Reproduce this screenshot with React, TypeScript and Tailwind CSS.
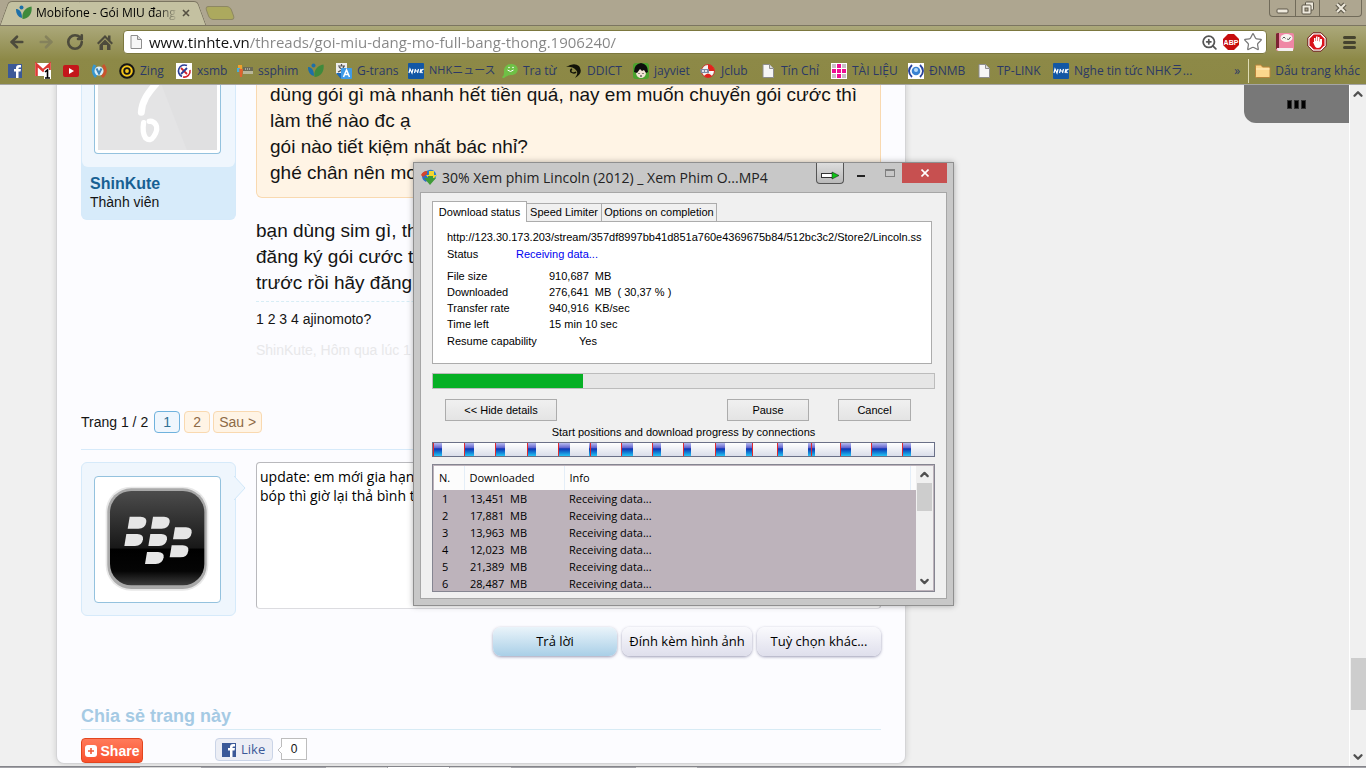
import type { ReactNode } from "react";
import { ArrowLeft, ArrowRight, ChevronDown, ChevronUp, RotateCw, Star, ZoomIn } from "lucide-react";

const ui = "font-['Open_Sans','Noto_Sans_CJK_JP',sans-serif]";

function LeafIcon() {
  return (
    <svg viewBox="0 0 16 16" className="size-4">
      <circle cx="5.500" cy="2.500" r="2" fill="#1d6fa8" />
      <path d="M0 4c3 0 6 2 6 9C2 12 0 9 0 4z" fill="#1d6fa8" />
      <path d="M6.500 14C5.500 7 9 3 15.500 1.500c1 6-2 12-9 12.500z" fill="#3f8a3c" />
    </svg>
  );
}

function PageIcon() {
  return (
    <svg viewBox="0 0 16 16" className="size-4">
      <path d="M3 1.500h6.500l4 4v9H3z" fill="#f6f6f6" stroke="#8d8d8d" />
      <path d="M9.500 1.500v4h4" fill="#dcdcdc" stroke="#8d8d8d" />
    </svg>
  );
}

function NhkIcon() {
  return (
    <svg viewBox="0 0 16 16" className="size-4">
      <rect width="16" height="16" rx="1" fill="#1257a5" />
      <path d="M1 10l1-4 2 4 1-4M6.500 10l1-4m-.5 2h3m-.5 2 1-4m1.500 4 1-4m2.500 0-3 2 2 2" fill="none" stroke="#fff" strokeWidth="1.200" />
    </svg>
  );
}

const icons: Record<string, ReactNode> = {
  facebook: (
    <svg viewBox="0 0 16 16" className="size-4">
      <rect x="1" y="1" width="14" height="14" fill="#3b5998" />
      <path d="M9 15V8.500H7V6h2V5q0-3 3-3h2v2.500h-1.500q-1 0-1 1V6H14l-.5 2.500h-2V15z" fill="#fff" />
    </svg>
  ),
  gmail: (
    <svg viewBox="0 0 16 16" className="size-4 overflow-visible">
      <rect y="0" width="16" height="13" fill="#fff" />
      <path d="M1.500 13V1.500L8 7.500l6.500-6V7" fill="none" stroke="#dd3a34" strokeWidth="2.600" />
      <path d="M9 10V7l3-2h2v8h2v3H9v-3h2v-3z" fill="#fff" />
      <path d="M10 9l2.500-2V15M10 15h5" fill="none" stroke="#000" strokeWidth="1.600" />
    </svg>
  ),
  youtube: (
    <svg viewBox="0 0 16 16" className="size-4">
      <rect y="2" width="16" height="12" rx="2" fill="#c4171b" />
      <path d="M6 5v6l5-3z" fill="#fff" />
    </svg>
  ),
  shield: (
    <svg viewBox="0 0 16 16" className="size-4">
      <path d="M4 2Q0 8 5 14" fill="none" stroke="#3797cf" strokeWidth="3" />
      <path d="M12 2q5 6-1 12" fill="none" stroke="#c9532e" strokeWidth="3" />
      <circle cx="8" cy="8" r="4.500" fill="#dceffa" />
      <path d="m5.500 5.500 2.500 5 2.500-5" fill="none" stroke="#3b84b8" strokeWidth="2" />
    </svg>
  ),
  zing: (
    <svg viewBox="0 0 16 16" className="size-4">
      <circle cx="8" cy="8" r="6.800" fill="#f3c51b" stroke="#151515" strokeWidth="2" />
      <circle cx="8" cy="8" r="2.800" fill="#f3c51b" stroke="#151515" strokeWidth="1.800" />
    </svg>
  ),
  xsmb: (
    <svg viewBox="0 0 16 16" className="size-4">
      <rect width="16" height="16" fill="#fff" />
      <path d="M11 2.500A6 6 0 1 0 6 13.500" fill="none" stroke="#2b3d96" strokeWidth="1.600" />
      <path d="M14 7a6 6 0 0 1-7 7" fill="none" stroke="#d2222c" strokeWidth="1.600" />
      <path d="m5 5 6 6" stroke="#d2222c" strokeWidth="1.800" />
      <path d="m11 5-6 6" stroke="#2b3d96" strokeWidth="1.800" />
    </svg>
  ),
  film: (
    <svg viewBox="0 0 16 16" className="size-4">
      <path d="M1 2h4v5H1z" fill="#f0a02b" />
      <path d="M0 5h3v4H0z" fill="#43b0d8" />
      <path d="M2 6h4l-1 8H3z" fill="#e0622e" />
      <path d="M6 4h10v4H6z" fill="#6b6a55" />
      <path d="M6 8h10v3H6z" fill="#b9b79a" />
      <path d="M8 6h6" stroke="#ddd" strokeDasharray="1 1" />
    </svg>
  ),
  leaf: <LeafIcon />,
  translate: (
    <svg viewBox="0 0 16 16" className="size-4">
      <rect width="11" height="11" fill="#ededed" />
      <path d="M2 3h7M5.500 1v2M8 3Q7 7 2 9m1-5 5 4" fill="none" stroke="#555" strokeWidth="1.200" />
      <path d="M0 10h5v6z" fill="#1d68b8" />
      <rect x="5" y="5" width="11" height="11" rx="1" fill="#3f9be8" />
      <path d="m7.500 14 3-7 3 7m-5-2.500h4" fill="none" stroke="#fff" strokeWidth="1.500" />
    </svg>
  ),
  nhk: <NhkIcon />,
  bubble: (
    <svg viewBox="0 0 16 16" className="size-4">
      <path d="M9 1c9 0 9 11 0 11-2 0-4 1-7 3 0 0-2 0-2-1 2-1 2-3 2-6 0-4 3-7 7-7z" fill="#6fc046" />
      <path d="M5.500 7q3 3 6 0" fill="none" stroke="#fff" />
      <circle cx="7" cy="4.500" r=".8" fill="#fff" />
      <circle cx="11" cy="4.500" r=".8" fill="#fff" />
    </svg>
  ),
  swirl: (
    <svg viewBox="0 0 16 16" className="size-4">
      <path d="M0 4Q8-1 13 3q5 7-4 12 4-5 1-8-4-4-10-3z" fill="#121208" />
      <path d="M10 9q-2 2-5 0-1-2 1-3" fill="none" stroke="#121208" strokeWidth="1.500" />
    </svg>
  ),
  face: (
    <svg viewBox="0 0 16 16" className="size-4">
      <rect width="16" height="16" rx="3" fill="#4ba32d" />
      <ellipse cx="8" cy="9.500" rx="5" ry="5.500" fill="#f2e4d6" />
      <path d="M1 9Q1 1 8 0q7 1 7 9l-2 1-2-3-2 1-2-2-3 4-3-1z" fill="#0d0d0d" />
      <path d="M5.500 10.500h1m3 0h1M7 13h2" stroke="#222" />
    </svg>
  ),
  ball: (
    <svg viewBox="0 0 16 16" className="size-4">
      <circle cx="8" cy="8" r="6.500" fill="#f3f3f3" stroke="#c5362b" />
      <path d="M8 1.500A6.500 6.500 0 0 1 14.500 8H8zM4 13q4-5 8 0-4 3-8 0z" fill="#e2231b" />
      <path d="M0 6h9v4H1z" fill="#7e8aa2" />
      <path d="M2 8h6m3 1h3" stroke="#fff" strokeWidth="1.500" strokeDasharray="2 1" />
    </svg>
  ),
  page: <PageIcon />,
  grid: (
    <svg viewBox="0 0 16 16" className="size-4">
      <rect width="16" height="16" fill="#fff" />
      <path d="M1 1h4v4H1zm10 0h4v4h-4zM1 11h4v4H1zm10 0h4v4h-4z" fill="#c9bfc6" />
      <path d="M6 1h4v4H6zM1 6h4v4H1zm5 0h4v4H6zm5 0h4v4h-4zm-5 5h4v4H6z" fill="#ee0f93" />
    </svg>
  ),
  globe: (
    <svg viewBox="0 0 16 16" className="size-4">
      <rect width="16" height="16" fill="#fff" />
      <path d="M4 2Q-2 8 4 14M12 2q6 6 0 12" fill="none" stroke="#27429b" strokeWidth="1.800" />
      <circle cx="8" cy="8" r="4.300" fill="#3a83d2" />
      <circle cx="8" cy="7" r="2" fill="#b9dcf8" />
    </svg>
  ),
};

const bookmarks = [
  { icon: "facebook", label: "", name: "Facebook", w: "w-7" },
  { icon: "gmail", label: "", name: "Gmail", w: "w-7" },
  { icon: "youtube", label: "", name: "YouTube", w: "w-7" },
  { icon: "shield", label: "", name: "Shield", w: "w-7" },
  { icon: "zing", label: "Zing", name: "Zing", w: "w-[57px]" },
  { icon: "xsmb", label: "xsmb", name: "xsmb", w: "w-[61px]" },
  { icon: "film", label: "ssphim", name: "ssphim", w: "w-[71px]" },
  { icon: "leaf", label: "", name: "Tinh tế", w: "w-7" },
  { icon: "translate", label: "G-trans", name: "G-trans", w: "w-[72px]" },
  { icon: "nhk", label: "NHKニュース", name: "NHK", w: "w-[94px] text-[11px]" },
  { icon: "bubble", label: "Tra từ", name: "Tra từ", w: "w-16" },
  { icon: "swirl", label: "DDICT", name: "DDICT", w: "w-[67px]" },
  { icon: "face", label: "jayviet", name: "jayviet", w: "w-[67px]" },
  { icon: "ball", label: "Jclub", name: "Jclub", w: "w-[60px]" },
  { icon: "page", label: "Tín Chỉ", name: "Tín Chỉ", w: "w-[71px]" },
  { icon: "grid", label: "TÀI LIỆU", name: "TÀI LIỆU", w: "w-[77px]" },
  { icon: "globe", label: "ĐNMB", name: "ĐNMB", w: "w-[68px]" },
  { icon: "page", label: "TP-LINK", name: "TP-LINK", w: "w-[77px]" },
  { icon: "nhk", label: "Nghe tin tức NHKラ...", name: "NHK radio", w: "w-[140px]" },
];

function TitleBar() {
  return (
    <header className="flex h-[25px] items-stretch bg-[#aea690]">
      <div className="relative ml-1 flex w-[198px] items-center pl-3">
        <span className="absolute inset-y-0 top-px left-0 w-3/5 -skew-x-[20deg] rounded-tl border-t border-l border-[#7b7561] bg-[#c4c1a1]" />
        <span className="absolute inset-y-0 top-px right-0 w-3/5 skew-x-[20deg] rounded-tr border-t border-r border-[#7b7561] bg-[#c4c1a1]" />
        <span className="relative"><LeafIcon /></span>
        <span className="relative ml-1 w-[142px] text-xs whitespace-nowrap text-black [mask-image:linear-gradient(to_right,black_85%,transparent)]">Mobifone - Gói MIU đang</span>
        <button aria-label="Close tab" className="relative ml-1">
          <svg viewBox="0 0 8 8" className="size-2"><path d="m1 1 6 6m0-6-6 6" stroke="#555042" strokeWidth="1.600" /></svg>
        </button>
      </div>
      <button aria-label="New tab" className="mt-[6px] ml-[5px] h-[14px] w-[26px] skew-x-[20deg] rounded border border-[#8d8763] bg-[#aca95e]" />
      <div className="mr-1 ml-auto flex h-[17px] rounded-b border border-t-0 border-[#716b5a]">
        <button aria-label="Minimize" className="flex w-[25px] items-center justify-center">
          <svg viewBox="0 0 13 13" className="size-[13px]"><rect x="1" y="7" width="11" height="4" rx="1" fill="#eee9dc" stroke="#5e594b" /></svg>
        </button>
        <button aria-label="Restore" className="flex w-[25px] items-center justify-center border-x border-[#716b5a]">
          <svg viewBox="0 0 14 14" className="size-[14px]" fill="#eee9dc" stroke="#5e594b"><rect x="4.500" y="1" width="8" height="8" rx="1" /><rect x="1" y="4" width="9" height="9" rx="1" /><rect x="4" y="7" width="3" height="3" fill="#aea690" /></svg>
        </button>
        <button aria-label="Close" className="flex w-[41px] items-center justify-center">
          <svg viewBox="0 0 12 12" className="size-3" fill="none"><path d="m2 2 8 8m0-8-8 8" stroke="#5e594b" strokeWidth="4.500" /><path d="m2 2 8 8m0-8-8 8" stroke="#eee9dc" strokeWidth="2.200" /></svg>
        </button>
      </div>
    </header>
  );
}

function Toolbar() {
  return (
    <div className="flex h-[32px] shrink-0 items-center border-t border-[#7b7561] pt-px pr-2 pl-2 text-[#4d4b3c]">
      <button aria-label="Back" className="mr-[11px]"><ArrowLeft size={18} strokeWidth={3.5} /></button>
      <button aria-label="Forward" className="mr-[11px] text-[#85825c]"><ArrowRight size={18} strokeWidth={3.5} /></button>
      <button aria-label="Reload" className="mr-[13px]"><RotateCw size={18} strokeWidth={3.5} /></button>
      <button aria-label="Home" className="mr-[10px]">
        <svg viewBox="0 0 16 16" className="size-4" fill="currentColor"><path d="M8 1 0 9l1.500 1.500L8 4l6.500 6.500L16 9l-2.500-2.500V1.500H11V4zM2.500 11 8 5.500l5.500 5.500v5H10v-5H6v5H2.500z" /></svg>
      </button>
      <div className="flex h-6 flex-1 items-center rounded-sm border border-[#7c783f] bg-white pr-[3px] pl-1">
        <PageIcon />
        <input
          aria-label="Address"
          readOnly
          defaultValue="www.tinhte.vn/threads/goi-miu-dang-mo-full-bang-thong.1906240/"
          className="ml-[5px] h-[22px] min-w-0 flex-1 bg-[linear-gradient(to_right,#111_100px,#858585_100px)] bg-clip-text text-[15px] text-transparent outline-none"
        />
        <ZoomIn size={17} strokeWidth={2.5} color="#555" />
        <svg viewBox="0 0 16 16" className="ml-[5px] size-4">
          <path d="M5 0h6l5 5v6l-5 5H5l-5-5V5z" fill="#c70d0d" />
          <text x="8" y="11" fontSize="7" fontWeight="700" textAnchor="middle" fill="#fff" fontFamily="Liberation Sans, sans-serif">ABP</text>
        </svg>
        <Star size={20} strokeWidth={1.5} color="#777" className="ml-1" />
      </div>
      <button aria-label="Dictionary" className="ml-2">
        <svg viewBox="0 0 20 20" className="size-5">
          <path d="M1 2q0-1 2-1h14q2 0 2 2v14l-2 2H3q-2 0-2-2z" fill="#ef86a5" />
          <path d="M1 2q0-1 2-1h1v15l-3 1z" fill="#7c2333" />
          <path d="M2 16h16v3H4q-2 0-2-3z" fill="#f2eef0" />
          <ellipse cx="11.500" cy="6" rx="6" ry="4" fill="#f6f2ef" />
          <path d="M7.500 6.500q1.500-3 3 0M12 7q2 2 3.500-2" fill="none" stroke="#555" />
        </svg>
      </button>
      <button aria-label="Blocker" className="ml-3">
        <svg viewBox="0 0 20 20" className="size-5">
          <path d="M6 .8h8L19.200 6v8L14 19.200H6L.8 14V6z" fill="#fff" stroke="#6b1512" />
          <path d="M6.700 2.500h6.600l4.200 4.200v6.600l-4.200 4.200H6.700l-4.200-4.200V6.700z" fill="#d8121b" />
          <path d="M6 10h1V6h1.500v3h.5V4.500h1.500V9h.5V5h1.500v4.500h.5V7H15v5q-1 4-4 4-2 0-3-1.500z" fill="#fff" />
        </svg>
      </button>
      <button aria-label="Menu" className="mr-[2px] ml-4 flex flex-col gap-[2px]">
        <span className="h-[3px] w-[13px] rounded-sm bg-[#45432f]" />
        <span className="h-[3px] w-[13px] rounded-sm bg-[#45432f]" />
        <span className="h-[3px] w-[13px] rounded-sm bg-[#45432f]" />
      </button>
    </div>
  );
}

function Bookmarks() {
  return (
    <nav className="flex h-[28px] items-center overflow-hidden border-b border-[#a5a5a5] pr-[6px] pl-[7px] text-xs whitespace-nowrap text-[#2b3866]">
      {bookmarks.map((b, i) => (
        <a key={i} href="#" aria-label={b.name} className={`flex shrink-0 items-center gap-[5px] ${b.w}`}>
          {icons[b.icon]}
          {b.label}
        </a>
      ))}
      <button aria-label="More bookmarks" className="ml-auto">»</button>
      <span className="mr-[6px] ml-2 h-6 w-px bg-[#dedbb4]" />
      <a href="#" className="flex items-center gap-1">
        <svg viewBox="0 0 16 16" className="size-4"><path d="M.5 3q0-1 1-1H6l1.500 2H14q1 0 1 1v8.500q0 1-1 1H1.500q-1 0-1-1z" fill="#fbd78c" stroke="#b8843b" /><path d="M1 6h13.500" stroke="#fff0c4" /></svg>
        Dấu trang khác
      </a>
    </nav>
  );
}

function Post() {
  return (
    <article className="flex items-start gap-5">
      <aside className="w-[155px] rounded-b-md border border-t-0 border-[#d6eafa] bg-[#d7ebfa]">
        <div className="rounded-b-md bg-[#eff6fd] pr-[14px] pb-[13px] pl-3">
          <div className="rounded-b border border-t-0 border-[#94c2de] bg-white px-[3px] pb-[3px]">
            <svg viewBox="141 6 360 204" className="h-[68px] w-full" preserveAspectRatio="none">
              <rect x="141" y="6" width="360" height="204" fill="#e4e4e5" />
              <path d="M330 6 410 210h91V6z" fill="#e0e0e1" />
              <path d="M325 0C308 25 275 50 272 97" fill="none" stroke="#fff" strokeWidth="21" strokeLinecap="round" />
              <path d="M279 128q-5 30 6 46 14 12 25-5 14-21 6-35-8-12-20-10" fill="none" stroke="#fff" strokeWidth="16" strokeLinecap="round" strokeLinejoin="round" />
            </svg>
          </div>
        </div>
        <div className="px-2 pt-[7px] pb-2">
          <a href="#" className="block text-base leading-5 font-bold text-[#176093]">ShinKute</a>
          <p className="text-sm leading-[17px]">Thành viên</p>
        </div>
      </aside>
      <div className="min-w-0 flex-1 text-[19px] leading-[26px] text-[#141414]">
        <blockquote className="rounded-b-md border border-t-0 border-[#f9d9b0] bg-[#fff4e5] px-[13px] pb-[11px]">
          dùng gói gì mà nhanh hết tiền quá, nay em muốn chuyển gói cước thì làm thế nào đc ạ<br />
          gói nào tiết kiệm nhất bác nhỉ?<br />
          ghé chân nên mo
        </blockquote>
        <p className="mt-5 whitespace-nowrap">
          bạn dùng sim gì, th<br />
          đăng ký gói cước t<br />
          trước rồi hãy đăng
        </p>
        <p className="mt-[5px] border-t border-dashed border-[#d7edf6] pt-[7px] text-sm leading-5">1 2 3 4 ajinomoto?</p>
        <p className="mt-[11px] text-sm leading-5 text-[#e8e8ea]">ShinKute, Hôm qua lúc 1</p>
      </div>
    </article>
  );
}

function BlackberryAvatar() {
  const keys = [[239, 350], [309, 350], [375, 382], [229, 402], [301, 402], [365, 436], [291, 456]];
  return (
    <svg viewBox="144 240 357 357" className="block w-full">
      <defs>
        <linearGradient id="key" x1="0" y1="0" x2="0" y2="1">
          <stop offset="0" stopColor="#4c4c4c" />
          <stop offset=".6" stopColor="#181818" />
          <stop offset=".62" stopColor="#000" />
          <stop offset=".85" stopColor="#050505" />
          <stop offset="1" stopColor="#3c3c3c" />
        </linearGradient>
      </defs>
      <rect x="167" y="260" width="308" height="312" rx="76" fill="#e8e8e8" />
      <rect x="172" y="265" width="298" height="302" rx="72" fill="#a9a9a9" />
      <rect x="180" y="273" width="283" height="283" rx="64" fill="url(#key)" />
      {keys.map(([x, y]) => (
        <path key={`${x}-${y}`} transform={`translate(${x} ${y})`} d="M0 0h33q19 1 17 16-3 20-24 20H-6z" fill="#e6e6e6" />
      ))}
    </svg>
  );
}

function Reply() {
  const base = "h-[29px] rounded-lg text-[13px] text-black shadow-[0_1px_3px_rgba(90,90,130,0.6)]";
  return (
    <form onSubmit={(e) => e.preventDefault()}>
      <div className="flex items-start gap-5">
        <div className="relative w-[155px] rounded-md border border-[#d6eafa] bg-[#eff6fd] pt-[13px] pr-[14px] pb-3 pl-3">
          <div className="rounded border border-[#94c2de] bg-white p-[3px]"><BlackberryAvatar /></div>
          <svg viewBox="0 0 12 24" className="absolute top-[13px] -right-[11px] h-6 w-3"><path d="M0 0 11 12 0 24z" fill="#eff6fd" /><path d="M0 0 11 12 0 24" fill="none" stroke="#d0e7f9" /></svg>
        </div>
        <textarea
          aria-label="Reply"
          className={`h-[147px] flex-1 resize-none rounded border border-[#b9b9bd] border-b-[#dcdce0] bg-white px-[3px] py-1 text-sm leading-[19px] text-black outline-none ${ui}`}
          defaultValue={"update: em mới gia hạn\nbóp thì giờ lại thả bình t"}
        />
      </div>
      <div className={`mt-[11px] flex justify-end gap-[5px] ${ui}`}>
        <button className={`w-[124px] bg-linear-to-b from-[#eaf4fa] to-[#a9cfe7] ${base}`}>Trả lời</button>
        <button className={`w-[130px] bg-linear-to-b from-[#fafafd] to-[#dfdfec] ${base}`}>Đính kèm hình ảnh</button>
        <button className={`w-[124px] bg-linear-to-b from-[#fafafd] to-[#dfdfec] ${base}`}>Tuỳ chọn khác...</button>
      </div>
    </form>
  );
}

function ShareRow() {
  return (
    <section>
      <h2 className="mt-12 border-b border-[#d7ebf5] pb-[1px] text-lg leading-6 font-bold text-[#a5cae4]">Chia sẻ trang này</h2>
      <div className="mt-2 flex items-start">
        <button className="flex h-[25px] w-[62px] items-center justify-center gap-1 rounded-sm border border-[#e2461f] bg-linear-to-b from-[#ff7a5a] to-[#f9502c] text-sm font-bold text-white">
          <svg viewBox="0 0 12 12" className="size-3"><rect width="12" height="12" rx="3" fill="#fff" /><path d="M6 3v6M3 6h6" stroke="#f15a38" strokeWidth="1.600" /></svg>
          Share
        </button>
        <button className={`ml-[72px] flex h-[23px] w-[58px] items-center gap-1 rounded-sm border border-[#cad4e7] bg-[#eceef5] pl-[5px] text-[13px] text-[#3b5998] ${ui}`}>
          {icons.facebook}
          Like
        </button>
        <div className="relative ml-2 flex h-[22px] w-[26px] items-center justify-center border border-[#bdbdbd] bg-white text-xs">
          0
          <svg viewBox="0 0 5 8" className="absolute top-[7px] -left-[5px] h-2 w-[5px]"><path d="M5 0 1 4l4 4" fill="#fff" stroke="#bdbdbd" /></svg>
        </div>
      </div>
    </section>
  );
}

function ForumPage() {
  const pageLink = "flex h-[22px] items-center justify-center rounded-sm border";
  return (
    <div className="ml-14 max-w-[850px] flex-1 self-start -mt-[3px] rounded-b-lg border border-t-0 border-[#d4d4d6] bg-[#fcfcff] px-6 shadow-[0_0_6px_rgba(0,0,0,0.15)]">
      <Post />
      <nav className="mt-[51px] flex h-[22px] items-center text-sm text-[#8d6a45]">
        <span className="mr-[6px] text-[#141414]">Trang 1 / 2</span>
        <a href="#" className={`w-[26px] border-[#6fb2dd] bg-[#eff6fd] text-[#2f7096] ${pageLink}`}>1</a>
        <a href="#" className={`ml-1 w-[26px] border-[#f9d9b0] bg-[#fff4e5] ${pageLink}`}>2</a>
        <a href="#" className={`ml-[3px] w-[49px] border-[#f9d9b0] bg-[#fff4e5] ${pageLink}`}>Sau &gt;</a>
      </nav>
      <hr className="mt-4 mb-3 border-[#d6eafa]" />
      <Reply />
      <ShareRow />
    </div>
  );
}

function PageScrollbar() {
  return (
    <div className="flex w-[17px] shrink-0 flex-col items-center border-l border-white bg-[#f0f0f0] text-[#505050]">
      <ChevronUp size={14} strokeWidth={4} className="mt-[2px]" />
      <span className="mt-auto mb-[40px] h-[52px] w-[15px] bg-[#cdcdcd]" />
      <ChevronDown size={14} strokeWidth={4} className="mb-[2px]" />
    </div>
  );
}

const stats = [
  ["File size", "910,687  MB"],
  ["Downloaded", "276,641  MB  ( 30,37 % )"],
  ["Transfer rate", "940,916  KB/sec"],
  ["Time left", "15 min 10 sec"],
];

const segments = [
  { x: 0, w: 9, red: 0 }, { x: 31, w: 10, red: 0 }, { x: 62, w: 10, red: 0 }, { x: 94, w: 9, red: 0 },
  { x: 125, w: 12, red: 0 }, { x: 156, w: 8, red: 1 }, { x: 188, w: 12, red: 0 }, { x: 219, w: 9, red: 0 },
  { x: 250, w: 8, red: 0 }, { x: 282, w: 10, red: 0 }, { x: 313, w: 7, red: 6 }, { x: 344, w: 6, red: 0 },
  { x: 375, w: 7, red: 3 }, { x: 407, w: 11, red: 0 }, { x: 438, w: 16, red: 0 }, { x: 469, w: 9, red: 0 },
];

const connections = ["13,451", "17,881", "13,963", "12,023", "21,389", "28,487"];

function DownloadDialog() {
  const button = "h-[22px] border border-[#acacac] bg-linear-to-b from-[#f0f0f0] to-[#e4e4e4]";
  return (
    <section role="dialog" aria-label="Download" className="absolute top-[162px] left-[413px] w-[541px] border border-[#8f8f8f] bg-[#c8c8c8] px-[6px] pb-[6px] text-[11px] text-black shadow-[0_0_6px_rgba(0,0,0,0.3)]">
      <div className={`flex h-[29px] items-start ${ui}`}>
        <svg viewBox="0 0 16 16" className="mt-[6px] ml-px size-4">
          <path d="M1 5q3-4 7-3l1 5-4 6q-5-3-4-8z" fill="#2a6fc9" />
          <path d="M0 6q2-4 6-4L6 5 2 8z" fill="#d6452c" />
          <path d="M6 2q5-3 8 1 3 4-1 8l-5-2z" fill="#2b7fc4" />
          <path d="M8 2h5v4h3l-6 6-5-6h3z" fill="#f2d62f" />
          <path d="M7 7h5v2h3l-6 7-6-7h4z" fill="#3f9b38" />
        </svg>
        <h1 className="mt-1 ml-[5px] text-sm leading-[21px] text-[#222]">30% Xem phim Lincoln (2012) _ Xem Phim O...MP4</h1>
        <button aria-label="Tray" className="ml-auto flex h-[21px] w-7 items-end justify-center rounded-b border border-t-0 border-[#555] bg-linear-to-b from-[#ddd] to-[#b9b9b9] pb-[3px]">
          <svg viewBox="0 0 18 9" className="h-[9px] w-[18px]"><rect x=".5" y="2.500" width="11" height="4" fill="#fff" stroke="#333" /><path d="m11 1 7 3.500L11 8z" fill="#0bc414" stroke="#222" strokeWidth=".6" /></svg>
        </button>
        <button aria-label="Minimize" className="flex h-5 w-[34px] items-center justify-center pt-[6px]"><span className="h-[2px] w-2 bg-[#222]" /></button>
        <button aria-label="Maximize" className="flex h-5 w-[24px] items-center justify-center"><span className="h-2 w-[10px] border border-t-2 border-[#808080]" /></button>
        <button aria-label="Close" className="flex h-5 w-[45px] items-center justify-center bg-[#c75050]">
          <svg viewBox="0 0 8 8" className="size-2"><path d="m.5.5 7 7m0-7-7 7" stroke="#fff" strokeWidth="1.600" /></svg>
        </button>
      </div>
      <div className="border border-[#a6a6a6] bg-[#f0f0f0] px-[11px] pt-2 pb-[6px]">
        <div role="tablist" className="flex items-end whitespace-nowrap">
          <button role="tab" aria-selected="true" className="relative z-10 -mb-px h-[21px] w-[95px] border border-b-0 border-[#acacac] bg-white">Download status</button>
          <button role="tab" aria-selected="false" className="h-[18px] w-[75px] border border-b-0 border-l-0 border-[#acacac]">Speed Limiter</button>
          <button role="tab" aria-selected="false" className="h-[18px] w-[115px] border border-b-0 border-l-0 border-[#acacac]">Options on completion</button>
        </div>
        <div className="mr-[3px] h-[143px] border border-[#acacac] bg-white px-[14px] pt-[7px] leading-4">
          <p className="whitespace-nowrap">http://123.30.173.203/stream/357df8997bb41d851a760e4369675b84/512bc3c2/Store2/Lincoln.ss</p>
          <p className="mt-px flex"><span className="w-[69px]">Status</span><span className="text-[#0000f0]">Receiving data...</span></p>
          <dl className="mt-[6px]">
            {stats.map(([k, v]) => (
              <div key={k} className="flex"><dt className="w-[102px]">{k}</dt><dd className="whitespace-pre">{v}</dd></div>
            ))}
            <div className="mt-px flex"><dt className="w-[132px]">Resume capability</dt><dd>Yes</dd></div>
          </dl>
        </div>
        <div role="progressbar" aria-valuenow={30} aria-label="Progress" className="mt-[9px] h-4 border border-[#bcbcbc] bg-[#e6e6e6]"><div className="h-full w-[30%] bg-[#06b025]" /></div>
        <div className="mt-[10px] flex pr-[24px] pl-[13px]">
          <button className={`w-[112px] ${button}`}>&lt;&lt; Hide details</button>
          <button className={`ml-auto w-[82px] ${button}`}>Pause</button>
          <button className={`ml-[29px] w-[73px] ${button}`}>Cancel</button>
        </div>
        <p className="mt-[3px] text-center leading-4">Start positions and download progress by connections</p>
        <svg viewBox="0 0 501 13" preserveAspectRatio="none" className="mt-[2px] block h-[15px] w-full border border-[#6a7088] bg-linear-to-b from-white to-[#dadeea]">
          <defs>
            <linearGradient id="seg" x1="0" y1="0" x2="0" y2="1">
              <stop offset="0" stopColor="#b9bcf0" />
              <stop offset=".35" stopColor="#6668cf" />
              <stop offset=".45" stopColor="#0f35b4" />
              <stop offset=".7" stopColor="#1277d2" />
              <stop offset="1" stopColor="#24c4f4" />
            </linearGradient>
          </defs>
          {segments.map((s) => (
            <g key={s.x}><rect x={s.x} width={s.w} height="13" fill="url(#seg)" /><rect x={s.x + s.red} width="1" height="13" fill="#e0282c" /></g>
          ))}
        </svg>
        <div className={`mt-[7px] flex h-[128px] overflow-hidden border border-[#858591] bg-[#bdb3bb] p-px ${ui}`}>
          <div className="min-w-0 flex-1 overflow-hidden">
            <table className="w-full table-fixed border-collapse text-left">
              <thead>
                <tr className="h-6 bg-[#fcfcfc]">
                  <th className="w-[30px] border-r border-[#e4eef8] pl-[5px] font-normal">N.</th>
                  <th className="w-[100px] border-r border-[#e4eef8] pl-[5px] font-normal">Downloaded</th>
                  <th className="border-r border-[#e4eef8] pl-[5px] font-normal">Info</th>
                  <th aria-label="Spacer" className="w-[6px]" />
                </tr>
              </thead>
              <tbody>
                {connections.map((c, i) => (
                  <tr key={c} className="h-[17px] leading-[17px]">
                    <td className="pl-2">{i + 1}</td>
                    <td className="pl-[6px] whitespace-pre">{c}  MB</td>
                    <td colSpan={2} className="pl-[5px]">Receiving data...</td>
                  </tr>
                ))}
              </tbody>
            </table>
          </div>
          <div className="flex w-[17px] flex-col items-center bg-[#f0f0f0] text-[#505050]">
            <ChevronUp size={13} strokeWidth={4} className="mt-[2px]" />
            <span className="mt-[2px] h-7 w-[15px] bg-[#cdcdcd]" />
            <ChevronDown size={13} strokeWidth={4} className="mt-auto mb-[2px]" />
          </div>
        </div>
      </div>
    </section>
  );
}

export default function App() {
  const task = "w-[61px] bg-[#d8d8d8]";
  return (
    <div className="relative flex h-screen flex-col overflow-hidden bg-[#f0f0f0] font-['Liberation_Sans',sans-serif] text-[#141414]">
      <div className={`shrink-0 bg-linear-to-b from-[#c4c1a1] via-[#8d8947] via-70% to-[#8c8845] ${ui}`}>
        <TitleBar />
        <Toolbar />
        <Bookmarks />
      </div>
      <main className="flex min-h-0 flex-1 items-stretch overflow-hidden">
        <ForumPage />
        <div className="ml-auto flex h-[38px] w-[105px] items-center justify-center gap-[2px] rounded-bl-xl bg-[#787878]">
          <span className="h-[9px] w-[5px] border border-[#333] bg-black" />
          <span className="h-[9px] w-[5px] border border-[#333] bg-black" />
          <span className="h-[9px] w-[5px] border border-[#333] bg-black" />
        </div>
        <PageScrollbar />
      </main>
      <footer className="flex h-[2px] shrink-0 gap-px border-t border-[#85858b] bg-[#a3a3a8] pl-[140px]">
        <span className={task} />
        <span className={`ml-[124px] ${task}`} />
        <span className="w-[61px] bg-white" />
        <span className={task} />
        <span className={`ml-[124px] ${task}`} />
      </footer>
      <DownloadDialog />
    </div>
  );
}
